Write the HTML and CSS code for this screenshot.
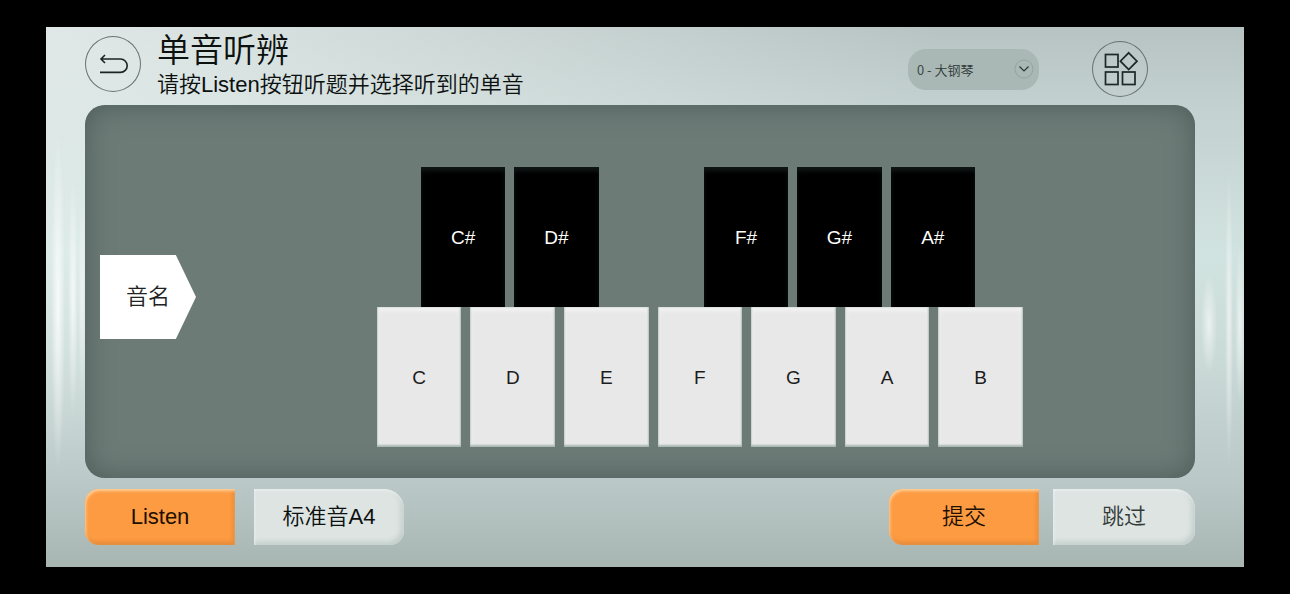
FILE: index.html
```html
<!DOCTYPE html>
<html lang="zh-CN">
<head>
  <meta charset="UTF-8" />
  <meta name="viewport" content="width=device-width, initial-scale=1.0"/>
  <title>单音听辨</title>
  <link rel="stylesheet" href="styles.css">
</head>
<body>
  <div class="app">
    <header class="header">
      <div class="header-left">
        <button type="button" class="round-btn back-btn" aria-label="返回">
          <svg width="56" height="56" viewBox="0 0 56 56" fill="none" stroke="#1c2423" stroke-width="1.6">
            <path d="M20 19 L16 23 L20 27 M16 23 H35.5 A6.7 6.7 0 0 1 35.5 36.4 H15"/>
          </svg>
        </button>
        <div class="titles">
          <h1>单音听辨</h1>
          <p>请按Listen按钮听题并选择听到的单音</p>
        </div>
      </div>

      <div class="header-right">
        <div class="instrument">
          <select id="instrument" aria-label="音色">
            <option>0 - 大钢琴</option>
          </select>
          <svg class="arrow" width="20" height="20" viewBox="0 0 20 20" fill="none">
            <circle cx="10" cy="10" r="9" stroke="#96a4a1" stroke-width="1"/>
            <path d="M5.5 7.5 L10 12 L14.5 7.5" stroke="#2c3635" stroke-width="1.2"/>
          </svg>
        </div>
        <button type="button" class="round-btn" aria-label="菜单">
          <svg width="56" height="56" viewBox="0 0 56 56" fill="none" stroke="#1c2726" stroke-width="1.7">
            <rect x="13.5" y="13.5" width="12.5" height="12.5"/>
            <path d="M36.7 11.8 L45 20.2 L36.7 28.6 L28.4 20.2 Z"/>
            <rect x="13.5" y="31" width="12.5" height="12.5"/>
            <rect x="30.5" y="31" width="12.5" height="12.5"/>
          </svg>
        </button>
      </div>
    </header>

    <main class="panel">
      <div class="tag">音名</div>
      <div class="keyboard">
        <div class="black-keys">
          <button type="button" class="key black">C#</button>
          <button type="button" class="key black">D#</button>
          <span></span>
          <button type="button" class="key black">F#</button>
          <button type="button" class="key black">G#</button>
          <button type="button" class="key black">A#</button>
        </div>
        <div class="white-keys">
          <button type="button" class="key white">C</button>
          <button type="button" class="key white">D</button>
          <button type="button" class="key white">E</button>
          <button type="button" class="key white">F</button>
          <button type="button" class="key white">G</button>
          <button type="button" class="key white">A</button>
          <button type="button" class="key white">B</button>
        </div>
      </div>
    </main>

    <footer class="footer">
      <div class="actions listen-actions">
        <button type="button" class="btn primary">Listen</button>
        <button type="button" class="btn plain">标准音A4</button>
      </div>
      <div class="actions answer-actions">
        <button type="button" class="btn primary">提交</button>
        <button type="button" class="btn plain skip">跳过</button>
      </div>
    </footer>
  </div>
</body>
</html>
```
FILE: styles.css
```css
* {
  box-sizing: border-box;
}

body {
  margin: 0;
  padding: 27px 46px;
  min-height: 100vh;
  display: flex;
  background: #000;
  color: #0c100f;
  font-family: "Liberation Sans", "Noto Sans CJK SC", sans-serif;
  font-weight: 350;
}

button,
select {
  font-family: inherit;
  font-weight: inherit;
  color: inherit;
  border: none;
  cursor: pointer;
}

.app {
  flex: 1;
  display: flex;
  flex-direction: column;
  padding: 0 49px 22px 39px;
  /* light streaks on both sides, then the brushed metal base */
  background:
    radial-gradient(ellipse 7px 170px at 12px 51%, rgba(255,255,255,0.8), rgba(255,255,255,0)),
    radial-gradient(ellipse 5px 120px at 27px 50%, rgba(255,255,255,0.7), rgba(255,255,255,0)),
    radial-gradient(ellipse 4px 100px at 36px 50%, rgba(255,255,255,0.5), rgba(255,255,255,0)),
    radial-gradient(ellipse 4px 150px at calc(100% - 15px) 54%, rgba(255,255,255,0.6), rgba(255,255,255,0)),
    radial-gradient(ellipse 8px 50px at calc(100% - 35px) 55%, rgba(255,255,255,0.6), rgba(255,255,255,0)),
    radial-gradient(ellipse 5px 80px at calc(100% - 4px) 55%, rgba(255,255,255,0.6), rgba(255,255,255,0)),
    radial-gradient(ellipse 75% 85% at 0 0, rgba(245,252,250,0.65), rgba(245,252,250,0)),
    linear-gradient(#b7c3c3 0%, #c3d1d0 15%, #d1e3e0 42%, #cbdbd8 60%, #bac8c8 84%, #a8b6b2 100%);
}

.header {
  display: flex;
  justify-content: space-between;
  align-items: center;
  padding: 5px 0;
}

.header-left {
  display: flex;
  align-items: flex-start;
  gap: 16px;
}

.back-btn {
  margin-top: 4px;
}

.round-btn {
  width: 56px;
  height: 56px;
  padding: 0;
  border-radius: 50%;
  background: none;
  box-shadow: inset 0 0 0 1px #69726f;
}

.round-btn svg {
  display: block;
}

.titles h1 {
  margin: 0;
  font-size: 33px;
  font-weight: 350;
  line-height: 37px;
}

.titles p {
  margin: 0;
  font-size: 22px;
  line-height: 31px;
}

.header-right {
  display: flex;
  align-items: center;
  gap: 53px;
  padding: 6px 47px 0 0;
}

.instrument {
  position: relative;
}

.instrument select {
  display: block;
  appearance: none;
  height: 41px;
  width: 131px;
  padding: 0 36px 0 9px;
  border-radius: 18px;
  background: #a9b7b5;
  color: #2f3937;
  font-family: "Noto Sans CJK SC", sans-serif;
  font-size: 13px;
}

.arrow {
  position: absolute;
  right: 5px;
  top: 10px;
  pointer-events: none;
}

.panel {
  flex: 1;
  display: flex;
  align-items: center;
  justify-content: space-between;
  padding: 11px 15.5% 0 15px;
  border-radius: 20px;
  background: #6d7b77;
  box-shadow: inset 0 0 28px rgba(66,82,78,0.75);
}

.tag {
  width: 96px;
  height: 84px;
  line-height: 84px;
  text-align: center;
  font-size: 22px;
  color: #222;
  background: #fff;
  clip-path: polygon(0 0, 79% 0, 100% 50%, 79% 100%, 0 100%);
}

.keyboard {
  width: 70%;
  padding-top: 20px;
}

.black-keys,
.white-keys {
  display: grid;
  grid-auto-rows: 140px;
  column-gap: 9px;
}

.black-keys {
  grid-template-columns: 84fr 84fr 87fr 84fr 84fr 84fr;
  padding: 0 48px 0 44px;
}

.white-keys {
  grid-template-columns: repeat(7, 1fr);
}

.key {
  padding: 2px 0 0;
  font-size: 19px;
  font-weight: 400;
}

.black {
  background: #000;
  color: #fff;
  box-shadow: inset 0 4px 4px #101716;
}

.white {
  background: #e8e8e8;
  color: #1c1c1c;
  box-shadow: inset 0 -2px 2px #a9b8b3, inset -1px 0 2px #bcc8c4, inset 1px 0 2px #d6dedb, inset 0 3px 5px #f6f6f6;
}

.footer {
  display: flex;
  justify-content: space-between;
  padding-top: 11px;
}

.actions {
  display: flex;
}

.listen-actions {
  gap: 19px;
}

.answer-actions {
  gap: 14px;
}

.btn {
  width: 150px;
  height: 56px;
  padding: 0;
  font-size: 22px;
  line-height: 56px;
}

.primary {
  border-radius: 14px 0 0 14px;
  background: #fd9b42;
  color: #210f00;
  box-shadow: inset 1px 2px 3px #ffd09a, inset -2px -3px 4px #e28a3c;
}

.plain {
  border-radius: 0 20px 14px 0;
  background: #dde4e2;
  box-shadow: inset 1px 2px 3px #e9eeec, inset -3px -3px 5px #c3cdca;
}

.skip {
  width: 142px;
  color: #333a38;
}
```
